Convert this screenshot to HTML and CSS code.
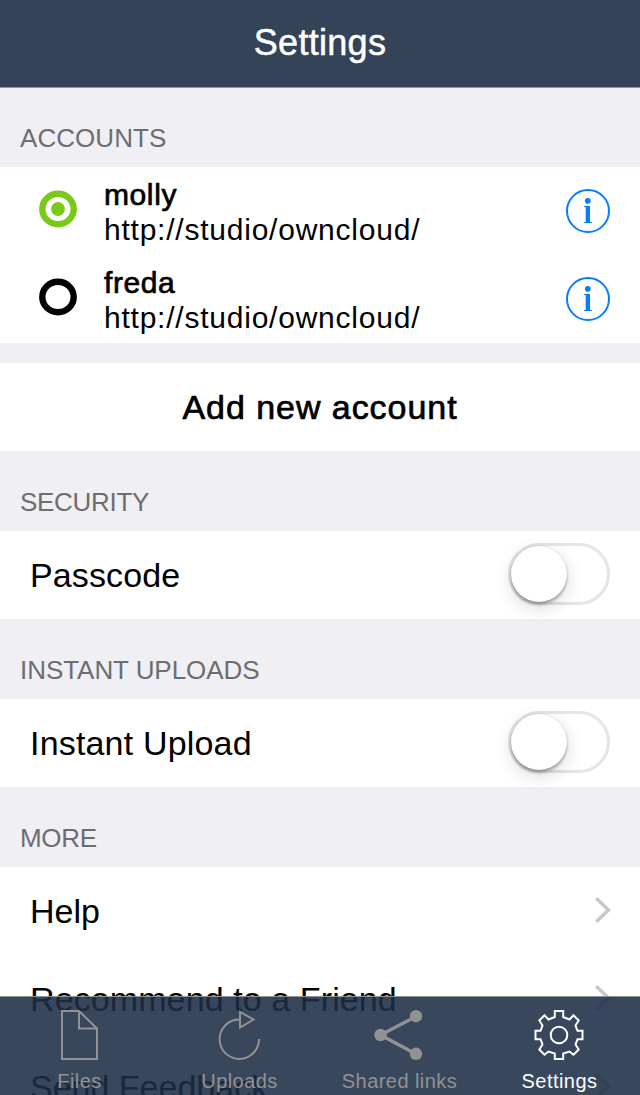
FILE: index.html
```html
<!DOCTYPE html>
<html lang="en">
<head>
<meta charset="utf-8">
<title>Settings</title>
<link rel="stylesheet" href="styles.css">
</head>
<body>
<div class="screen">
  <header class="navbar"><h1 class="navbar-title">Settings</h1></header>
  <main class="content">
    <h2 class="section-title accounts">ACCOUNTS</h2>
    <div class="account">
      <svg class="radio" width="38" height="38" viewBox="0 0 38 38"><ellipse cx="19" cy="19" rx="15.7" ry="15.2" fill="none" stroke="#7ac918" stroke-width="6.4"/><circle cx="19" cy="19" r="6.900" fill="#7ac918"/></svg>
      <div class="account-text"><div class="account-name">molly</div><div class="account-url">http://studio/owncloud/</div></div>
      <svg class="info" width="44" height="44" viewBox="0 0 44 44"><circle cx="22" cy="22" r="21" fill="none" stroke="#067dff" stroke-width="2"/><circle cx="21.8" cy="11.8" r="2.9" fill="#067dff"/><path d="M18 17H24V33H26V34H18V33H19.700V18H18Z" fill="#067dff"/></svg>
    </div>
    <div class="account">
      <svg class="radio" width="38" height="38" viewBox="0 0 38 38"><ellipse cx="19" cy="19" rx="15.7" ry="15.2" fill="none" stroke="#000" stroke-width="6.4"/></svg>
      <div class="account-text"><div class="account-name">freda</div><div class="account-url">http://studio/owncloud/</div></div>
      <svg class="info" width="44" height="44" viewBox="0 0 44 44"><circle cx="22" cy="22" r="21" fill="none" stroke="#067dff" stroke-width="2"/><circle cx="21.8" cy="11.8" r="2.9" fill="#067dff"/><path d="M18 17H24V33H26V34H18V33H19.700V18H18Z" fill="#067dff"/></svg>
    </div>
    <div class="add-account">Add new account</div>
    <h2 class="section-title security">SECURITY</h2>
    <div class="row"><span class="passcode">Passcode</span><span class="switch"><span class="knob"></span></span></div>
    <h2 class="section-title uploads">INSTANT UPLOADS</h2>
    <div class="row"><span class="spaced">Instant Upload</span><span class="switch"><span class="knob"></span></span></div>
    <h2 class="section-title more">MORE</h2>
    <div class="row"><span>Help</span><svg class="chevron" width="18" height="28" viewBox="0 0 18 28"><path d="M3.300 2.300L15.500 14L3.300 25.700" fill="none" stroke="#c7c7cc" stroke-width="3.600"/></svg></div>
    <div class="row"><span class="friend">Recommend to a Friend</span><svg class="chevron" width="18" height="28" viewBox="0 0 18 28"><path d="M3.300 2.300L15.500 14L3.300 25.700" fill="none" stroke="#c7c7cc" stroke-width="3.600"/></svg></div>
    <div class="row"><span>Send Feedback</span><svg class="chevron" width="18" height="28" viewBox="0 0 18 28"><path d="M3.300 2.300L15.500 14L3.300 25.700" fill="none" stroke="#c7c7cc" stroke-width="3.600"/></svg></div>
  </main>
  <nav class="tabbar">
    <div class="tab">
      <svg class="tab-icon" width="54" height="52" viewBox="0 0 54 52" fill="none" stroke="#929292" stroke-width="2"><path d="M10 2H27L45 19.500V50H10ZM27 2V19.500H45"/></svg>
      <span>Files</span>
    </div>
    <div class="tab">
      <svg class="tab-icon" width="54" height="52" viewBox="0 0 54 52" fill="none" stroke="#929292" stroke-width="2"><path d="M27.500 10.500A19.700 19.700 0 1 0 47 30M28 3V18.500L41.500 10.500Z"/></svg>
      <span>Uploads</span>
    </div>
    <div class="tab">
      <svg class="tab-icon" width="54" height="52" viewBox="0 0 54 52" fill="#929292"><path d="M44 7.500L8.500 26L44 45" fill="none" stroke="#929292" stroke-width="3.400"/><circle cx="8.500" cy="26" r="6.200"/><circle cx="44" cy="7.200" r="6.200"/><circle cx="44" cy="44.800" r="6.200"/></svg>
      <span>Shared links</span>
    </div>
    <div class="tab active">
      <svg class="tab-icon" width="54" height="52" viewBox="0 0 54 52" fill="none" stroke="#fff" stroke-width="2"><path d="M22.800 2H31.200V8L37.500 10.500L41.500 6.300L46.700 11.500L43.500 16.500L45.500 21.800H50.500V30.200H45.500L43.500 35.500L46.700 40.500L41.500 45.700L37.500 42.500L31.200 44.500V50H22.800V44.500L16.500 42.500L12.500 45.700L7.300 40.500L10.500 35.500L8.500 30.200H3.500V21.800H8.500L10.500 16.500L7.300 11.500L12.500 6.300L16.500 10.500L22.800 8Z"/><circle cx="27" cy="26" r="8.300"/></svg>
      <span>Settings</span>
    </div>
  </nav>
</div>
</body>
</html>
```
FILE: styles.css
```css
* { box-sizing: border-box; }
body { margin: 0; font-family: "Liberation Sans", Arial, sans-serif; color: #000; background: #efeff4; }
.screen { position: relative; width: 640px; height: 1095px; overflow: hidden; background: #efeff4; }
h1, h2 { margin: 0; font-weight: 400; }
.navbar { height: 88px; background: #354359; border-bottom: 1px solid #92959d; display: flex; justify-content: center; }
.navbar-title { color: #fff; font-size: 36px; line-height: 85px; letter-spacing: .3px; -webkit-text-stroke: .5px #fff; }
.content { margin-top: -1px; }
.section-title { height: 80px; padding: 31px 20px 0; font-size: 26px; line-height: 40px; color: #6d6d72; }
.accounts { letter-spacing: .05px; }
.security { letter-spacing: -.3px; }
.uploads { letter-spacing: -.05px; }
.more { letter-spacing: -.3px; }
.account { display: flex; height: 88px; padding: 0 30px 0 39px; background: #fff; }
.radio { flex: none; margin-top: 23px; }
.account-text { flex: 1; padding: 10px 0 0 27px; font-size: 30px; line-height: 35px; }
.account-name { letter-spacing: .6px; -webkit-text-stroke: .7px #000; }
.account-url { letter-spacing: .77px; }
.info { flex: none; margin-top: 22px; }
.add-account { height: 88px; margin-top: 20px; background: #fff; text-align: center; font-size: 34px; line-height: 88px; letter-spacing: .95px; -webkit-text-stroke: .7px #000; }
.row { display: flex; justify-content: space-between; height: 88px; padding: 0 30px; background: #fff; font-size: 34px; line-height: 88px; }
.passcode { letter-spacing: .12px; }
.spaced { letter-spacing: .18px; }
.friend { letter-spacing: .1px; }
.switch { width: 102px; height: 62px; margin-top: 12px; border: 3px solid #e5e5e5; border-radius: 31px; }
.knob { display: block; width: 56px; height: 56px; border-radius: 50%; background: #fff; box-shadow: 0 3px 3px rgba(0,0,0,.25), 0 6px 18px rgba(0,0,0,.15), 0 0 2px rgba(0,0,0,.2); }
.chevron { margin: 29px -1px 0 0; }
.tabbar { position: absolute; left: 0; right: 0; bottom: 0; height: 99px; display: flex; background: rgba(28,46,69,.88); border-top: 1px solid #929292; }
.tab { width: 160px; display: flex; flex-direction: column; align-items: center; padding: 12px 2px 0 0; font-size: 20px; line-height: 24px; letter-spacing: .45px; color: #929292; }
.tab span { margin-left: 1px; }
.tab-icon { flex: none; margin: 0 1px 8px 0; }
.active { color: #fff; }
```
